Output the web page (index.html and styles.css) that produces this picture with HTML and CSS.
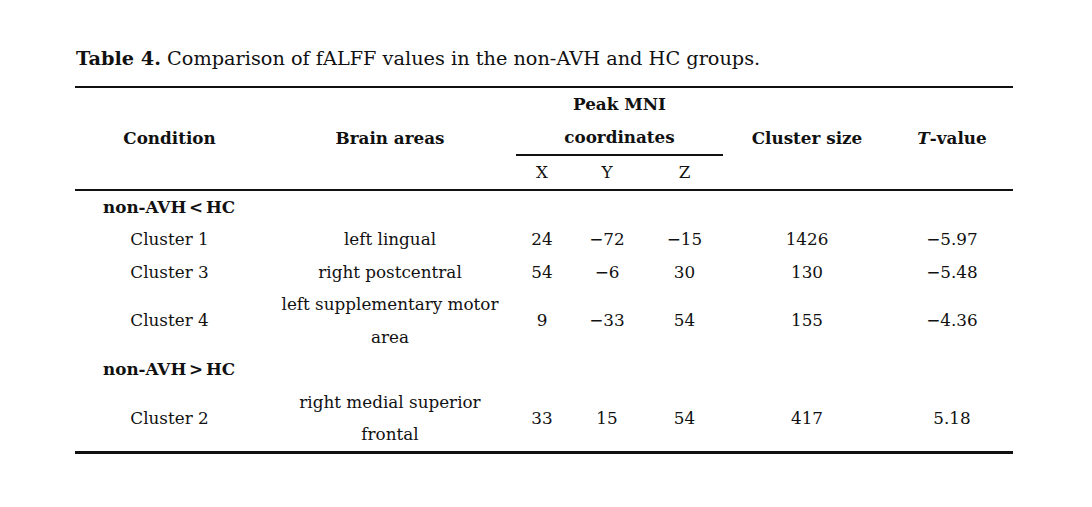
FILE: index.html
```html
<!DOCTYPE html>
<html>
<head>
<meta charset="utf-8">
<link rel="stylesheet" href="styles.css">
</head>
<body>
<div class="page">
  <p class="caption"><b>Table 4.</b> Comparison of fALFF values in the non-AVH and HC groups.</p>
  <table class="tbl">
    <colgroup>
      <col class="c-cond"><col class="c-area"><col class="c-x"><col class="c-y"><col class="c-z"><col class="c-size"><col class="c-t">
    </colgroup>
    <thead>
      <tr>
        <th rowspan="3">Condition</th>
        <th rowspan="3">Brain areas</th>
        <th colspan="3" class="peak">Peak MNI</th>
        <th rowspan="3">Cluster size</th>
        <th rowspan="3"><i>T</i>-value</th>
      </tr>
      <tr><th colspan="3" class="coord">coordinates</th></tr>
      <tr class="xyz"><td>X</td><td>Y</td><td>Z</td></tr>
    </thead>
    <tbody>
      <tr class="group"><td colspan="7">non-AVH &lt; HC</td></tr>
      <tr><td>Cluster 1</td><td>left lingual</td><td>24</td><td>−72</td><td>−15</td><td>1426</td><td>−5.97</td></tr>
      <tr><td>Cluster 3</td><td>right postcentral</td><td>54</td><td>−6</td><td>30</td><td>130</td><td>−5.48</td></tr>
      <tr><td>Cluster 4</td><td>left supplementary motor area</td><td>9</td><td>−33</td><td>54</td><td>155</td><td>−4.36</td></tr>
      <tr class="group"><td colspan="7">non-AVH &gt; HC</td></tr>
      <tr class="last"><td>Cluster 2</td><td>right medial superior frontal</td><td>33</td><td>15</td><td>54</td><td>417</td><td>5.18</td></tr>
    </tbody>
  </table>
</div>
</body>
</html>
```

FILE: styles.css
```css
html, body {
  margin: 0;
  padding: 0;
  background: #ffffff;
}
.page {
  padding: 45px 0 0 75px;
  font-family: "DejaVu Serif", "Liberation Serif", serif;
  color: #111;
}
.caption {
  margin: 0 0 13px 1px;
  font-size: 19.3px;
  line-height: 28px;
  color: #111;
}
.caption b {
  font-weight: bold;
}
.tbl {
  border-collapse: collapse;
  table-layout: fixed;
  width: 938px;
  font-size: 16.8px;
  line-height: 32.5px;
  border-top: 2px solid #111;
  border-bottom: 3px solid #111;
}
.c-cond { width: 189px; }
.c-area { width: 252px; }
.c-x { width: 52px; }
.c-y { width: 78px; }
.c-z { width: 77px; }
.c-size { width: 168px; }
.c-t { width: 122px; }
.tbl th, .tbl td {
  padding: 0;
  text-align: center;
  vertical-align: middle;
}
.tbl th {
  font-weight: bold;
}
.tbl th i {
  font-style: italic;
}
.tbl .peak {
  height: 32px;
}
.tbl .coord {
  border-bottom: 2px solid #111;
  height: 33px;
}
.tbl .xyz td {
  height: 33px;
}
.tbl thead {
  border-bottom: 2px solid #111;
}
.tbl td:nth-child(2) {
  padding: 0 6px;
}
.tbl .xyz td:nth-child(2) {
  padding: 0;
}
.tbl .group td {
  text-align: left;
  font-weight: bold;
  padding-left: 28px;
  word-spacing: -3px;
}
```
